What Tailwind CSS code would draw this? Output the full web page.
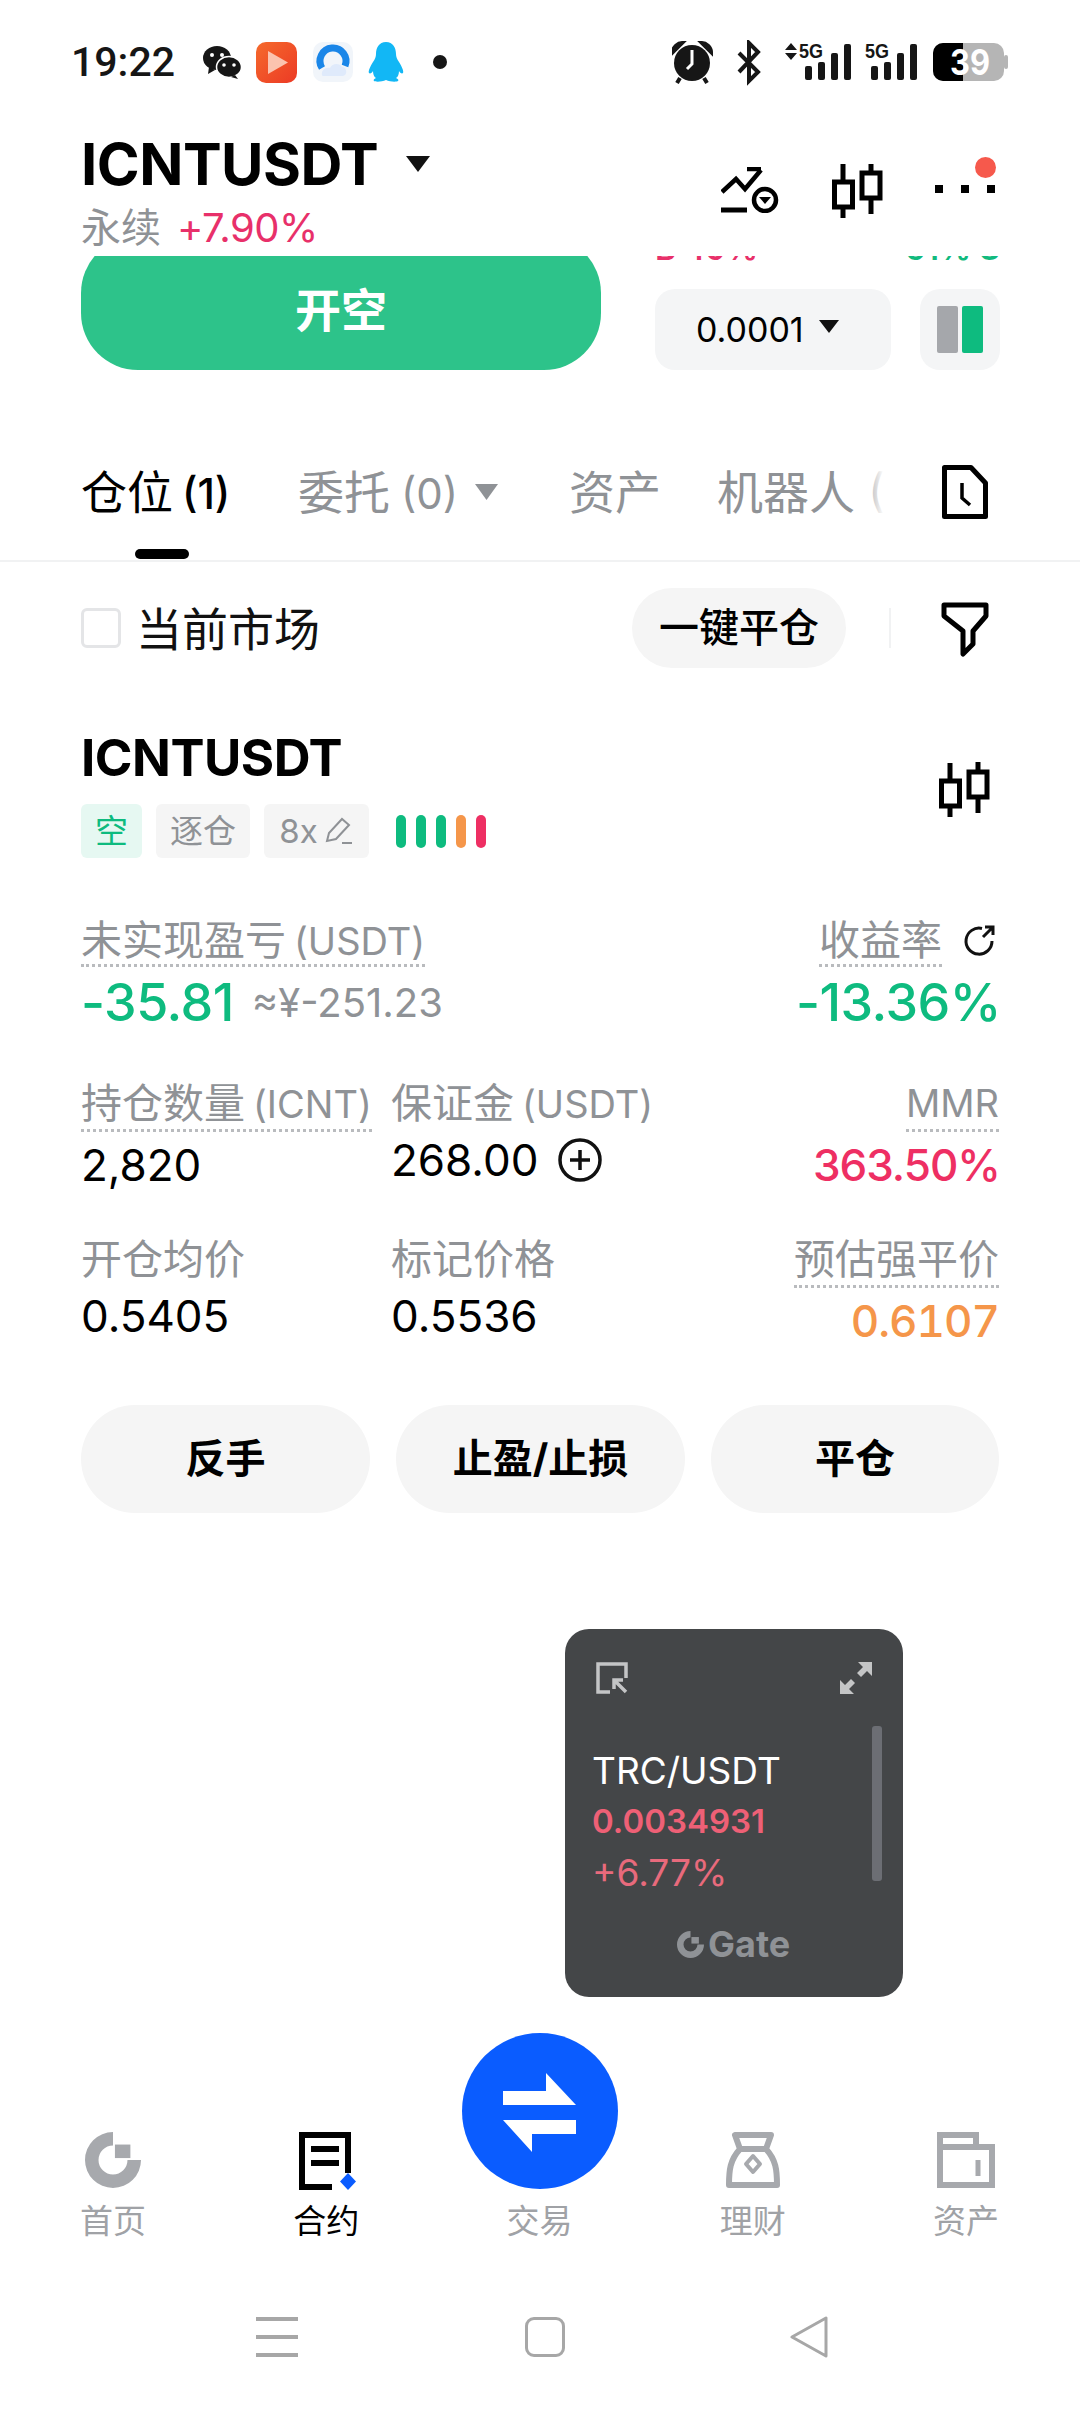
<!DOCTYPE html>
<html><head><meta charset="utf-8"><script src="https://cdn.jsdelivr.net/npm/@tailwindcss/browser@4"></script></head>
<body class="bg-white">
<div class="relative w-[1080px] h-[2412px] bg-white overflow-hidden font-['Inter','Noto_Sans_CJK_SC',sans-serif] text-black">

<!-- status bar -->
<div class="h-[120px] relative">
  <div class="flex items-center h-[124px] pl-[71px]">
    <span class="text-[41px] font-medium leading-none text-[#161616] font-['Roboto',sans-serif] w-[132px]">19:22</span>
    <svg class="w-[38px] h-[34px] shrink-0" viewBox="0 0 38 34"><ellipse cx="14" cy="13" rx="14" ry="12" fill="#161616"/><path d="M6 22l-1 7 7-4z" fill="#161616"/><circle cx="9" cy="10" r="2" fill="#fff"/><circle cx="19" cy="10" r="2" fill="#fff"/><ellipse cx="26" cy="22" rx="12.500" ry="10.500" fill="#161616" stroke="#fff" stroke-width="1.500"/><path d="M32 30l3 4-7-2z" fill="#161616"/><circle cx="21" cy="20" r="1.800" fill="#fff"/><circle cx="31" cy="20" r="1.800" fill="#fff"/></svg>
    <svg class="w-[41px] h-[41px] ml-[15px] shrink-0" viewBox="0 0 41 41"><defs><linearGradient id="v" x1="0" y1="0" x2="1" y2="1"><stop offset="0" stop-color="#f56a2c"/><stop offset="1" stop-color="#ec3a25"/></linearGradient></defs><rect width="41" height="41" rx="10" fill="url(#v)"/><path d="M12 9l20 11.500L12 32z" fill="#fbc3af"/></svg>
    <svg class="w-[40px] h-[40px] ml-[16px] shrink-0" viewBox="0 0 40 40"><rect width="40" height="40" rx="10" fill="#f1f5fa"/><path d="M9 26A13 13 0 1 1 32 24" fill="none" stroke="#1a86e8" stroke-width="7"/><path d="M9 33c-1-5 4-8 8-7 2-5 10-5 12-1 5 0 6 8 1 9H12c-2 0-3 0-3-1z" fill="#dfeafb"/></svg>
    <svg class="w-[36px] h-[40px] ml-[15px] shrink-0" viewBox="0 0 36 40"><path d="M18 0c7 0 10 6 10 12 0 3 1 5 3 8 3 5 5 9 4 11-1 1-3 0-4-2 0 3-1 6-3 7 2 1 3 2 2 3-1 1-8 1-12-1-4 2-11 2-12 1-1-1 0-2 2-3-2-1-3-4-3-7-1 2-3 3-4 2-1-2 1-6 4-11 2-3 3-5 3-8C8 6 11 0 18 0z" fill="#12b7f5"/></svg>
    <span class="w-[14px] h-[14px] rounded-full bg-[#161616] ml-[29px] shrink-0"></span>
  </div>
  <svg class="absolute left-[672px] top-[40px] w-[340px] h-[46px]" viewBox="672 40 340 46">
    <circle cx="692" cy="63" r="18" fill="#161616"/><path d="M692 50v14l-5 5" stroke="#fff" stroke-width="3" fill="none"/><path d="M673 52c0-5 5-9 9-9l-9 9zM711 52c0-5-5-9-9-9l9 9z" stroke="#161616" stroke-width="4" fill="#161616"/><path d="M680 78l-3 5M704 78l3 5" stroke="#161616" stroke-width="4"/>
    <path d="M739 53l19 19-9 9V43l9 9-19 20" fill="none" stroke="#161616" stroke-width="4"/>
    <path d="M785 50l6-7 6 7zM785 53l6 7 6-7z" fill="#161616"/>
    <text x="799" y="58" font-size="20" font-weight="700" fill="#161616" font-family="Liberation Sans" textLength="24" lengthAdjust="spacingAndGlyphs">5G</text>
    <rect x="805" y="66" width="7" height="14" rx="2" fill="#161616"/><rect x="818" y="62" width="7" height="18" rx="2" fill="#161616"/><rect x="831" y="53" width="7" height="27" rx="2" fill="#161616"/><rect x="844" y="44" width="7" height="36" rx="2" fill="#161616"/>
    <text x="865" y="58" font-size="20" font-weight="700" fill="#161616" font-family="Liberation Sans" textLength="24" lengthAdjust="spacingAndGlyphs">5G</text>
    <rect x="871" y="66" width="7" height="14" rx="2" fill="#161616"/><rect x="884" y="62" width="7" height="18" rx="2" fill="#161616"/><rect x="897" y="53" width="7" height="27" rx="2" fill="#161616"/><rect x="910" y="44" width="7" height="36" rx="2" fill="#161616"/>
    <rect x="933" y="43" width="71" height="38" rx="10" fill="#b5b5b5"/><path d="M943 43h20v38h-20a10 10 0 0 1-10-10V53a10 10 0 0 1 10-10z" fill="#000"/><rect x="1004" y="55" width="4" height="14" rx="2" fill="#b5b5b5"/>
    <text x="950" y="75" font-size="36" font-weight="700" fill="#fff" font-family="Inter" textLength="40" lengthAdjust="spacingAndGlyphs">39</text>
  </svg>
</div>

<!-- header -->
<div class="h-[136px] relative pl-[81px] pt-[22px]">
  <div class="flex items-center h-[44px]">
    <span class="text-[58px] font-bold leading-none tracking-[-0.5px]">ICNTUSDT</span>
    <svg class="w-[24px] h-[16px] ml-[28px]" viewBox="0 0 24 16"><path d="M0 0h24L12 16z" fill="#111"/></svg>
  </div>
  <div class="flex items-center h-[48px] mt-[18px]">
    <span class="text-[40px] leading-none text-[#8f9296]">永续</span>
    <span class="text-[40px] leading-none text-[#e8306a] ml-[16px] tracking-[-0.5px]">+7.90%</span>
  </div>
  <svg class="absolute left-[721px] top-[47px] w-[58px] h-[46px]" viewBox="0 0 58 46" fill="none" stroke="#000" stroke-width="4.500"><path d="M1 25l14-13 9 10L40 3M26 2h14v0"/><path d="M0 43h26" stroke-width="5"/><circle cx="44" cy="33" r="11"/><path d="M38 30h12l-6 7z" fill="#000" stroke="none"/></svg>
  <svg class="absolute left-[832px] top-[44px] w-[52px] h-[54px]" viewBox="0 0 52 54" fill="none" stroke="#000" stroke-width="5"><path d="M11 0v54M39 -2v52"/><rect x="2.500" y="18" width="18" height="25" fill="#fff"/><rect x="30" y="9" width="18" height="25" fill="#fff"/></svg>
  <div class="absolute left-[935px] top-[65px] flex gap-[18px]"><span class="w-[8px] h-[8px] bg-black"></span><span class="w-[8px] h-[8px] bg-black"></span><span class="w-[8px] h-[8px] bg-black"></span></div>
  <span class="absolute left-[975px] top-[37px] w-[21px] h-[21px] rounded-full bg-[#f6594c]"></span>
</div>

<!-- clipped order panel -->
<div class="h-[114px] overflow-hidden flex pl-[81px]">
  <div class="w-[520px] h-[134px] -mt-[20px] rounded-[57px] bg-[#2dc38a] flex items-center justify-center pt-[14px] shrink-0">
    <span class="text-[46px] font-bold text-white leading-none">开空</span>
  </div>
  <div class="ml-[54px] w-[345px]">
    <div class="flex justify-between h-[32px] text-[32px] leading-none font-semibold -mt-[23px]">
      <span class="text-[#e8306a]">B 49%</span><span class="text-[#11ba7e]">51% S</span>
    </div>
    <div class="flex justify-between mt-[24px]">
      <div class="w-[236px] h-[81px] rounded-[20px] bg-[#f4f5f6] flex items-center pl-[41px]">
        <span class="text-[34px] leading-none">0.0001</span>
        <svg class="w-[20px] h-[13px] ml-[15px] -mt-[6px]" viewBox="0 0 20 13"><path d="M0 0h20L10 13z" fill="#111"/></svg>
      </div>
      <div class="w-[80px] h-[81px] rounded-[20px] bg-[#f4f5f6] flex items-center justify-center gap-[4px]">
        <span class="w-[21px] h-[47px] bg-[#a5a7ab] rounded-[2px]"></span><span class="w-[21px] h-[47px] bg-[#0ebb7f] rounded-[2px]"></span>
      </div>
    </div>
  </div>
</div>

<!-- tabs -->
<div class="mt-[70px] h-[104px] flex items-center pl-[81px] relative">
  <span class="text-[46px] leading-none w-[217px] whitespace-nowrap">仓位 <span class="font-medium text-[42px] -ml-[4px]">(1)</span></span>
  <span class="text-[46px] leading-none text-[#8f9296] w-[177px] whitespace-nowrap">委托 <span class="text-[42px] -ml-[2px]">(0)</span></span>
  <svg class="w-[23px] h-[16px]" viewBox="0 0 23 16"><path d="M0 0h23L11.500 16z" fill="#8f9296"/></svg>
  <span class="text-[46px] leading-none text-[#8f9296] ml-[71px]">资产</span>
  <div class="w-[167px] ml-[56px] overflow-hidden whitespace-nowrap relative">
    <span class="text-[46px] leading-none text-[#8f9296]">机器人 (0)</span>
    <span class="absolute right-0 top-0 bottom-0 w-[24px] bg-gradient-to-r from-white/0 to-white"></span>
  </div>
  <svg class="absolute left-[942px] top-[25px] w-[46px] h-[54px]" viewBox="0 0 46 54" fill="none" stroke="#000" stroke-width="5"><path d="M2.500 2.500H29L43.500 18v33.500h-41z" stroke-linejoin="round"/><path d="M20 18v15l8 7" stroke-width="3.500"/></svg>
</div>
<div class="mt-[5px] ml-[135px] w-[54px] h-[10px] rounded-full bg-black"></div>
<div class="mt-[1px] h-[2px] bg-[#f1f2f3]"></div>

<!-- filter row -->
<div class="mt-[26px] h-[80px] flex items-center pl-[81px] relative">
  <span class="w-[40px] h-[40px] rounded-[6px] border-[3px] border-[#e4e5e7]"></span>
  <span class="text-[46px] leading-none ml-[15px] text-[#111] mt-[2px]">当前市场</span>
  <div class="ml-[312px] w-[214px] h-[80px] rounded-[40px] bg-[#f5f5f5] flex items-center justify-center">
    <span class="text-[40px] leading-none font-medium">一键平仓</span>
  </div>
  <span class="ml-[43px] w-[2px] h-[40px] bg-[#f1f2f3]"></span>
  <svg class="absolute left-[941px] top-[14px] w-[48px] h-[56px]" viewBox="0 0 48 56" fill="none" stroke="#000" stroke-width="5" stroke-linejoin="round"><path d="M3 3h42v11L32 29v13l-10 10V29L3 14z"/></svg>
</div>

<!-- position title -->
<div class="mt-[59px] px-[81px] flex justify-between items-center">
  <div>
    <div class="h-[60px] flex items-center text-[51px] font-bold leading-none tracking-[-0.5px]">ICNTUSDT</div>
    <div class="mt-[17px] flex items-center h-[54px] text-[33px] text-[#8f9296] leading-none">
      <span class="w-[61px] h-[54px] rounded-[6px] bg-[#e6f8f2] text-[#0ebb7f] flex items-center justify-center">空</span>
      <span class="w-[94px] h-[54px] rounded-[6px] bg-[#f5f5f5] flex items-center justify-center ml-[14px]">逐仓</span>
      <span class="w-[105px] h-[54px] rounded-[6px] bg-[#f5f5f5] flex items-center justify-center gap-[6px] ml-[14px]">8x<svg class="w-[30px] h-[30px]" viewBox="0 0 30 30" fill="none" stroke="#8f9296" stroke-width="2"><path d="M3 25l2-8L18 3l7 6-13 14zM18 27h10"/></svg></span>
      <div class="flex gap-[10px] ml-[27px]">
        <span class="w-[10px] h-[33px] rounded-full bg-[#0ebb7f]"></span><span class="w-[10px] h-[33px] rounded-full bg-[#0ebb7f]"></span><span class="w-[10px] h-[33px] rounded-full bg-[#0ebb7f]"></span><span class="w-[10px] h-[33px] rounded-full bg-[#f5964a]"></span><span class="w-[10px] h-[33px] rounded-full bg-[#ee2f63]"></span>
      </div>
    </div>
  </div>
  <svg class="w-[52px] h-[56px] mr-[8px] -mt-[6px]" viewBox="0 0 52 54" fill="none" stroke="#000" stroke-width="5"><path d="M11 0v54M39 -2v52"/><rect x="2.500" y="18" width="18" height="25" fill="#fff"/><rect x="30" y="9" width="18" height="25" fill="#fff"/></svg>
</div>

<!-- stats -->
<div class="mt-[60px] px-[81px]">
  <div class="flex justify-between">
    <div>
      <span class="inline-block h-[46px] text-[41px] leading-[44px] text-[#8f9296] border-b-[3px] border-dotted border-[#b9bbbe] box-content whitespace-nowrap">未实现盈亏<span class="text-[38px] ml-[8px]">(USDT)</span></span>
      <div class="h-[72px] flex items-center">
        <span class="text-[52px] leading-none font-medium text-[#0ebb7f] tracking-[-0.5px]">-35.81</span>
        <span class="text-[40px] leading-none text-[#8f9296] ml-[18px]">≈¥-251.23</span>
      </div>
    </div>
    <div class="flex flex-col items-end">
      <div class="flex items-start">
        <span class="inline-block h-[46px] text-[41px] leading-[44px] text-[#8f9296] border-b-[3px] border-dotted border-[#b9bbbe] box-content">收益率</span>
        <svg class="w-[34px] h-[34px] ml-[20px] mt-[6px] mr-[3px]" viewBox="0 0 34 34" fill="none" stroke="#111" stroke-width="3"><path d="M20 4.500A13 13 0 1 0 30 17M21 13L31 3M23 3h8v8"/></svg>
      </div>
      <div class="h-[72px] flex items-center text-[52px] leading-none font-medium text-[#0ebb7f] tracking-[-0.5px] -mr-[2px]">-13.36%</div>
    </div>
  </div>

  <div class="mt-[41px] grid grid-cols-[310px_1fr_auto] gap-y-[43px] items-start">
    <div>
      <span class="inline-block h-[46px] pb-[3px] text-[41px] leading-[46px] text-[#8f9296] border-b-[3px] border-dotted border-[#b9bbbe] box-content whitespace-nowrap">持仓数量<span class="text-[38px] ml-[8px]">(ICNT)</span></span>
      <div class="h-[56px] mt-[5px] flex items-center text-[44px] leading-none">2,820</div>
    </div>
    <div>
      <div class="h-[46px] text-[41px] leading-[46px] text-[#8f9296] whitespace-nowrap">保证金<span class="text-[38px] ml-[8px]">(USDT)</span></div>
      <div class="h-[56px] mt-[6px] flex items-center text-[44px] leading-none">268.00
        <svg class="w-[44px] h-[44px] ml-[20px]" viewBox="0 0 44 44" fill="none" stroke="#111" stroke-width="3.500"><circle cx="22" cy="22" r="20"/><path d="M22 12v20M12 22h20"/></svg>
      </div>
    </div>
    <div class="flex flex-col items-end">
      <span class="inline-block h-[46px] pb-[3px] text-[38px] leading-[46px] text-[#8f9296] border-b-[3px] border-dotted border-[#b9bbbe] box-content">MMR</span>
      <div class="h-[56px] mt-[5px] flex items-center text-[44px] leading-none font-medium text-[#ee2f63] tracking-[-1px] -mr-[1px]">363.50%</div>
    </div>

    <div>
      <div class="h-[46px] text-[41px] leading-[46px] text-[#8f9296]">开仓均价</div>
      <div class="h-[56px] mt-[6px] flex items-center text-[44px] leading-none">0.5405</div>
    </div>
    <div>
      <div class="h-[46px] text-[41px] leading-[46px] text-[#8f9296]">标记价格</div>
      <div class="h-[56px] mt-[6px] flex items-center text-[44px] leading-none">0.5536</div>
    </div>
    <div class="flex flex-col items-end">
      <span class="inline-block h-[46px] pb-[3px] text-[41px] leading-[46px] text-[#8f9296] border-b-[3px] border-dotted border-[#b9bbbe] box-content whitespace-nowrap">预估强平价</span>
      <div class="h-[56px] mt-[5px] flex items-center text-[44px] leading-none font-medium text-[#f5964a] tabular-nums tracking-[-1px]">0.6107</div>
    </div>
  </div>
</div>

<!-- action buttons -->
<div class="mt-[56px] px-[81px] flex justify-between text-[40px] font-bold leading-none">
  <div class="w-[289px] h-[108px] rounded-[54px] bg-[#f5f5f5] flex items-center justify-center">反手</div>
  <div class="w-[289px] h-[108px] rounded-[54px] bg-[#f5f5f5] flex items-center justify-center">止盈/止损</div>
  <div class="w-[288px] h-[108px] rounded-[54px] bg-[#f5f5f5] flex items-center justify-center">平仓</div>
</div>

<!-- bottom nav -->
<div class="mt-[520px] h-[208px] pl-[81px] pr-[82px] pb-[4px] flex justify-between items-end text-[33px] leading-none text-[#a0a2a6]">
  <div class="w-[64px] flex flex-col items-center">
    <svg class="w-[58px] h-[56px] shrink-0" viewBox="0 0 58 58"><path d="M29 0A29 29 0 1 0 58 29H44A15 15 0 1 1 29 14z" fill="#a7a9ad"/><rect x="31" y="13" width="16" height="14" fill="#a7a9ad"/></svg>
    <span class="mt-[17px] h-[32px] whitespace-nowrap">首页</span>
  </div>
  <div class="w-[64px] flex flex-col items-center">
    <svg class="w-[64px] h-[58px] shrink-0" viewBox="0 0 64 58" fill="none"><path d="M54 41V3H8v52h30" stroke="#000" stroke-width="6"/><rect x="17" y="14" width="28" height="6" fill="#000"/><rect x="17" y="28" width="28" height="6" fill="#000"/><path d="M54 41l8 8.500-8 8.500-8-8.500z" fill="#0a5cff"/></svg>
    <span class="mt-[15px] h-[32px] whitespace-nowrap text-black">合约</span>
  </div>
  <div class="w-[64px] flex flex-col items-center">
    <svg class="w-[156px] h-[156px] shrink-0" viewBox="0 0 156 156"><circle cx="78" cy="78" r="78" fill="#0a5cff"/><path d="M84 40l30 32H41V58h43zM41 87h73v14H70v18z" fill="#fff"/></svg>
    <span class="mt-[16px] h-[32px] whitespace-nowrap">交易</span>
  </div>
  <div class="w-[64px] flex flex-col items-center">
    <svg class="w-[54px] h-[56px] shrink-0" viewBox="0 0 54 56" fill="none" stroke="#a7a9ad" stroke-width="6" stroke-linejoin="round"><path d="M9 3h36l-5 14H14zM14 17C4 28 3 38 3 53h48c0-15-1-25-11-36"/><path d="M27 24l7 8-7 8-7-8z" stroke-width="4"/></svg>
    <span class="mt-[17px] h-[32px] whitespace-nowrap">理财</span>
  </div>
  <div class="w-[64px] flex flex-col items-center">
    <svg class="w-[58px] h-[56px] shrink-0" viewBox="0 0 58 56" fill="none" stroke="#a7a9ad" stroke-width="6"><path d="M3 53V3h36v12"/><path d="M3 15h52v38H3z"/><path d="M41 28v16" stroke-width="5"/></svg>
    <span class="mt-[17px] h-[32px] whitespace-nowrap">资产</span>
  </div>
</div>

<!-- system nav -->
<div class="mt-[75px] pl-[256px] flex items-center gap-[227px]">
  <div class="w-[42px] h-[40px] flex flex-col justify-between"><span class="h-[4px] bg-[#a7a7a7]"></span><span class="h-[4px] bg-[#a7a7a7]"></span><span class="h-[4px] bg-[#a7a7a7]"></span></div>
  <span class="w-[40px] h-[40px] rounded-[9px] border-[3px] border-[#a7a7a7]"></span>
  <svg class="w-[38px] h-[42px] -ml-[2px]" viewBox="0 0 38 42" fill="none" stroke="#a7a7a7" stroke-width="3" stroke-linejoin="round"><path d="M36 2v38L2 21z"/></svg>
</div>

<!-- floating ticker window -->
<div class="absolute left-[565px] top-[1629px] w-[338px] h-[368px] rounded-[24px] bg-[#444648]">
  <svg class="absolute left-[31px] top-[33px] w-[32px] h-[32px]" viewBox="0 0 32 32" fill="none" stroke="#c4c5c6" stroke-width="3.500"><path d="M14 30H2V2h28v14"/><path d="M19 19l11 11M18 27v-9h9" /></svg>
  <svg class="absolute left-[275px] top-[33px] w-[32px] h-[32px]" viewBox="0 0 32 32" fill="#c4c5c6"><path d="M18 0h14v14l-5-5-6 6-4-4 6-6zM0 32V18l5 5 6-6 4 4-6 6 5 5z"/></svg>
  <span class="absolute left-[307px] top-[97px] w-[10px] h-[155px] rounded-[3px] bg-[#6c6e74]"></span>
  <div class="pt-[121px] pl-[27px]">
    <div class="h-[40px] flex items-center text-[37px] leading-none text-white">TRC/USDT</div>
    <div class="h-[40px] mt-[11px] flex items-center text-[33px] leading-none font-semibold text-[#ee6076]">0.0034931</div>
    <div class="h-[40px] mt-[11px] flex items-center text-[37px] leading-none text-[#e86a7c]">+6.77%</div>
  </div>
  <div class="absolute left-[112px] top-[297px] flex items-center gap-[4px]">
    <svg class="w-[27px] h-[27px]" viewBox="0 0 58 58"><path d="M29 0A29 29 0 1 0 58 29H44A15 15 0 1 1 29 14z" fill="#8f9296"/><rect x="31" y="13" width="16" height="14" fill="#8f9296"/></svg>
    <span class="text-[36px] font-bold leading-none text-[#8f9296]">Gate</span>
  </div>
</div>
</div>
</body></html>
